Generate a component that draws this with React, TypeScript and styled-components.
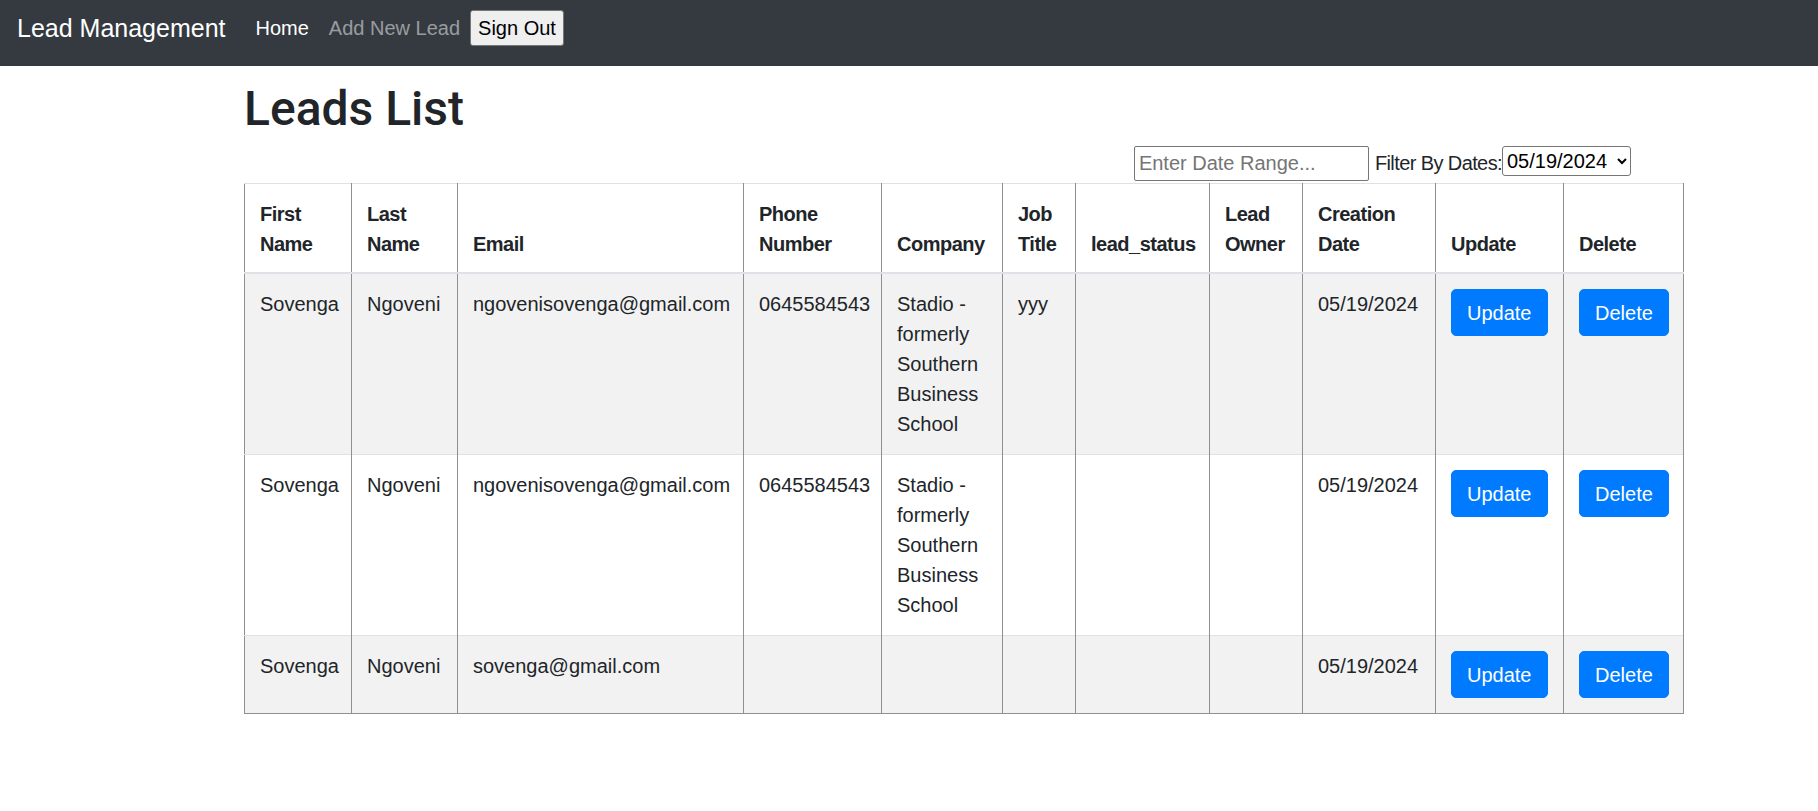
import React from "react";
import styled, { createGlobalStyle } from "styled-components";

const GlobalStyle = createGlobalStyle`
  html, body {
    margin: 0;
    padding: 0;
    background: #ffffff;
  }
  body {
    font-family: "Liberation Sans", Arial, sans-serif;
    font-size: 20px;
    line-height: 1.5;
    color: #212529;
  }
  * { box-sizing: border-box; }
`;

const NavBar = styled.nav`
  display: flex;
  align-items: center;
  height: 66px;
  padding: 0 17px 10px;
  background: #343a40;
`;

const Brand = styled.a`
  font-size: 25px;
  line-height: 37px;
  color: #ffffff;
  margin-right: 20px;
  text-decoration: none;
`;

const NavLink = styled.a<{ $active?: boolean }>`
  font-size: 20px;
  line-height: 30px;
  padding: 10px;
  color: ${(p) => (p.$active ? "#ffffff" : "rgba(255,255,255,0.5)")};
  text-decoration: none;
`;

const SignOutButton = styled.button`
  height: 36px;
  padding: 0 7px;
  font-family: "Liberation Sans", Arial, sans-serif;
  font-size: 20px;
  color: #000000;
  background: #efefef;
  border: 1px solid #767676;
  border-radius: 3px;
`;

const Main = styled.main`
  width: 1439px;
  margin-left: 244px;
  padding-top: 13px;
`;

const Title = styled.h1`
  margin: 0;
  font-family: Roboto, "Liberation Sans", Arial, sans-serif;
  font-size: 48px;
  line-height: 60px;
  font-weight: 500;
  color: #212529;
`;

const FilterRow = styled.div`
  display: flex;
  justify-content: flex-end;
  align-items: flex-start;
  margin-top: 7px;
  padding-right: 52px;
  height: 35px;
`;

const DateInput = styled.input`
  width: 235px;
  height: 35px;
  padding: 1px 4px;
  font-family: "Liberation Sans", Arial, sans-serif;
  font-size: 20px;
  color: #212529;
  border: 1px solid #767676;
  border-radius: 2px;
  &::placeholder {
    color: #757575;
  }
`;

const FilterLabel = styled.label`
  margin: 2px 0 0 6px;
  line-height: 30px;
  font-size: 20px;
  letter-spacing: -0.6px;
  color: #212529;
`;

const DateSelect = styled.select`
  width: 129px;
  height: 30px;
  font-family: "Liberation Sans", Arial, sans-serif;
  font-size: 20px;
  color: #000000;
  background: #ffffff;
  border: 1px solid #767676;
  border-radius: 3px;
`;

const Table = styled.table`
  width: 1439px;
  margin-top: 2px;
  table-layout: fixed;
  border-collapse: collapse;
  border-left: 1px solid #8f8f8f;
  border-bottom: 1px solid #8f8f8f;
`;

const Col = styled.col<{ $w: number }>`
  width: ${(p) => p.$w}px;
`;

const HeadCell = styled.th`
  padding: 15px 15px 13px;
  text-align: left;
  vertical-align: bottom;
  font-weight: 700;
  letter-spacing: -0.5px;
  line-height: 30px;
  color: #212529;
  border-top: 1px solid #dee2e6;
  border-bottom: 2px solid #dee2e6;
  border-right: 1px solid #8f8f8f;
`;

const Row = styled.tr`
  &:nth-child(odd) {
    background: #f2f2f2;
  }
`;

const Cell = styled.td`
  padding: 15px;
  vertical-align: top;
  line-height: 30px;
  color: #212529;
  border-top: 1px solid #dee2e6;
  border-right: 1px solid #8f8f8f;
`;

const ActionButton = styled.button`
  display: inline-block;
  height: 47px;
  padding: 0 15px;
  font-family: "Liberation Sans", Arial, sans-serif;
  font-size: 20px;
  line-height: 30px;
  color: #ffffff;
  background: #007bff;
  border: 1px solid #007bff;
  border-radius: 5px;
`;

const widths = [107, 106, 286, 138, 121, 73, 134, 93, 133, 128, 120];

const headers: React.ReactNode[] = [
  <>First<br />Name</>,
  <>Last<br />Name</>,
  "Email",
  <>Phone<br />Number</>,
  "Company",
  <>Job<br />Title</>,
  "lead_status",
  <>Lead<br />Owner</>,
  <>Creation<br />Date</>,
  "Update",
  "Delete",
];

type Lead = {
  first: string;
  last: string;
  email: string;
  phone: string;
  company: string;
  job: string;
  status: string;
  owner: string;
  date: string;
};

const leads: Lead[] = [
  {
    first: "Sovenga",
    last: "Ngoveni",
    email: "ngovenisovenga@gmail.com",
    phone: "0645584543",
    company: "Stadio - formerly Southern Business School",
    job: "yyy",
    status: "",
    owner: "",
    date: "05/19/2024",
  },
  {
    first: "Sovenga",
    last: "Ngoveni",
    email: "ngovenisovenga@gmail.com",
    phone: "0645584543",
    company: "Stadio - formerly Southern Business School",
    job: "",
    status: "",
    owner: "",
    date: "05/19/2024",
  },
  {
    first: "Sovenga",
    last: "Ngoveni",
    email: "sovenga@gmail.com",
    phone: "",
    company: "",
    job: "",
    status: "",
    owner: "",
    date: "05/19/2024",
  },
];

export default function App() {
  return (
    <>
      <GlobalStyle />
      <NavBar>
        <Brand href="#">Lead Management</Brand>
        <NavLink href="#" $active>Home</NavLink>
        <NavLink href="#">Add New Lead</NavLink>
        <SignOutButton>Sign Out</SignOutButton>
      </NavBar>
      <Main>
        <Title>Leads List</Title>
        <FilterRow>
          <DateInput placeholder="Enter Date Range..." />
          <FilterLabel>Filter By Dates:</FilterLabel>
          <DateSelect defaultValue="05/19/2024">
            <option value="05/19/2024">05/19/2024</option>
          </DateSelect>
        </FilterRow>
        <Table>
          <colgroup>
            {widths.map((w, i) => (
              <Col key={i} $w={w} />
            ))}
          </colgroup>
          <thead>
            <tr>
              {headers.map((h, i) => (
                <HeadCell key={i}>{h}</HeadCell>
              ))}
            </tr>
          </thead>
          <tbody>
            {leads.map((l, i) => (
              <Row key={i}>
                <Cell>{l.first}</Cell>
                <Cell>{l.last}</Cell>
                <Cell>{l.email}</Cell>
                <Cell>{l.phone}</Cell>
                <Cell>{l.company}</Cell>
                <Cell>{l.job}</Cell>
                <Cell>{l.status}</Cell>
                <Cell>{l.owner}</Cell>
                <Cell>{l.date}</Cell>
                <Cell>
                  <ActionButton>Update</ActionButton>
                </Cell>
                <Cell>
                  <ActionButton>Delete</ActionButton>
                </Cell>
              </Row>
            ))}
          </tbody>
        </Table>
      </Main>
    </>
  );
}
